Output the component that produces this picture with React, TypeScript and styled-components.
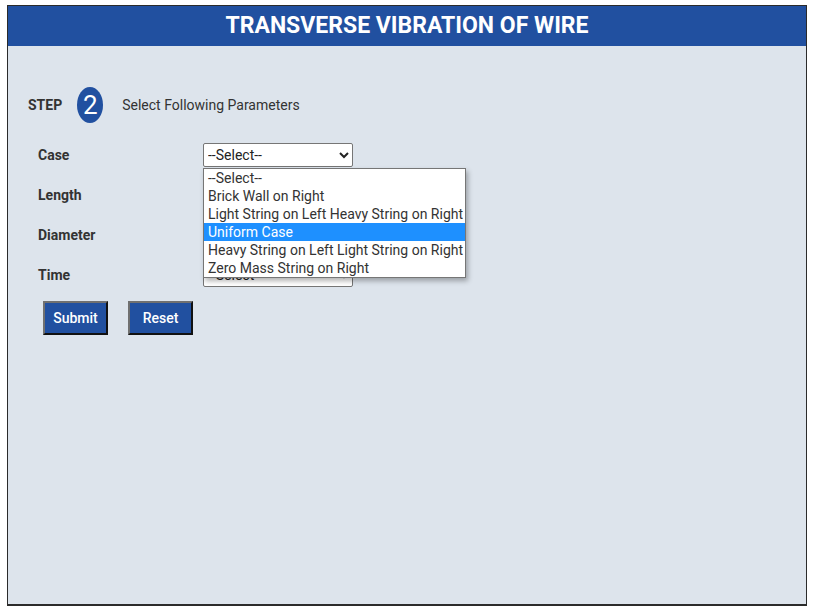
import React from 'react';
import styled, { createGlobalStyle } from 'styled-components';

const GlobalStyle = createGlobalStyle`
  body {
    margin: 0;
    background: #ffffff;
    font-family: Roboto, "Liberation Sans", sans-serif;
  }
`;

const Frame = styled.div`
  box-sizing: border-box;
  margin: 5px 0 0 7px;
  width: 800px;
  height: 601px;
  background: #dde4ec;
  border: 1px solid #2b2b2b;
  border-bottom-width: 2px;
`;

const Header = styled.h1`
  margin: 0;
  height: 40px;
  background: #2150a0;
  color: #ffffff;
  font-size: 23px;
  font-weight: 700;
  line-height: 40px;
  text-align: center;
`;

const StepRow = styled.div`
  display: flex;
  align-items: center;
  margin-top: 41px;
  padding-left: 20px;
`;

const StepLabel = styled.span`
  font-size: 14px;
  font-weight: 700;
  color: #333333;
`;

const Badge = styled.span`
  display: inline-flex;
  align-items: center;
  justify-content: center;
  width: 26px;
  height: 36px;
  margin-left: 15px;
  border-radius: 50%;
  background: #2150a0;
  color: #ffffff;
  font-size: 26px;
`;

const StepText = styled.span`
  margin-left: 19px;
  font-size: 14px;
  color: #333333;
`;

const Form = styled.form`
  margin-top: 12px;
  padding-left: 30px;
`;

const Row = styled.div`
  display: grid;
  grid-template-columns: 165px 150px;
  align-items: center;
  height: 40px;
`;

const Label = styled.label`
  font-size: 14px;
  font-weight: 700;
  color: #333333;
`;

const SelectWrap = styled.div`
  position: relative;
`;

const Select = styled.select`
  box-sizing: border-box;
  width: 150px;
  height: 24px;
  font-family: Roboto, "Liberation Sans", sans-serif;
  font-size: 14px;
  color: #222222;
  background: #ffffff;
  border: 1px solid #767676;
  border-radius: 2px;
`;

const OptionList = styled.ul`
  position: absolute;
  top: 25px;
  left: 0;
  z-index: 2;
  box-sizing: border-box;
  width: 263px;
  margin: 0;
  padding: 0;
  list-style: none;
  background: #ffffff;
  border: 1px solid #767676;
  box-shadow: 2px 3px 5px rgba(0, 0, 0, 0.3);
`;

const OptionItem = styled.li<{ $active?: boolean }>`
  height: 18px;
  padding-left: 4px;
  font-size: 14px;
  line-height: 18px;
  white-space: nowrap;
  color: ${(p) => (p.$active ? '#ffffff' : '#333333')};
  background: ${(p) => (p.$active ? '#1e90ff' : 'transparent')};
`;

const Buttons = styled.div`
  display: flex;
  gap: 20px;
  margin-top: 6px;
  padding-left: 5px;
`;

const Button = styled.button`
  box-sizing: border-box;
  width: 65px;
  height: 34px;
  background: #2150a0;
  color: #ffffff;
  font-family: Roboto, "Liberation Sans", sans-serif;
  font-size: 14px;
  font-weight: 500;
  border: 2px solid;
  border-color: #707070 #111111 #111111 #707070;
`;

const fields = ['Case', 'Length', 'Diameter', 'Time'];

const caseOptions = [
  '--Select--',
  'Brick Wall on Right',
  'Light String on Left Heavy String on Right',
  'Uniform Case',
  'Heavy String on Left Light String on Right',
  'Zero Mass String on Right',
];

export default function App() {
  return (
    <>
      <GlobalStyle />
      <Frame>
        <Header>TRANSVERSE VIBRATION OF WIRE</Header>
        <StepRow>
          <StepLabel>STEP</StepLabel>
          <Badge>2</Badge>
          <StepText>Select Following Parameters</StepText>
        </StepRow>
        <Form onSubmit={(e) => e.preventDefault()}>
          {fields.map((f, i) => (
            <Row key={f}>
              <Label>{f}</Label>
              <SelectWrap>
                <Select defaultValue="">
                  <option value="">--Select--</option>
                </Select>
                {i === 0 && (
                  <OptionList>
                    {caseOptions.map((o) => (
                      <OptionItem key={o} $active={o === 'Uniform Case'}>
                        {o}
                      </OptionItem>
                    ))}
                  </OptionList>
                )}
              </SelectWrap>
            </Row>
          ))}
          <Buttons>
            <Button type="submit">Submit</Button>
            <Button type="reset">Reset</Button>
          </Buttons>
        </Form>
      </Frame>
    </>
  );
}
